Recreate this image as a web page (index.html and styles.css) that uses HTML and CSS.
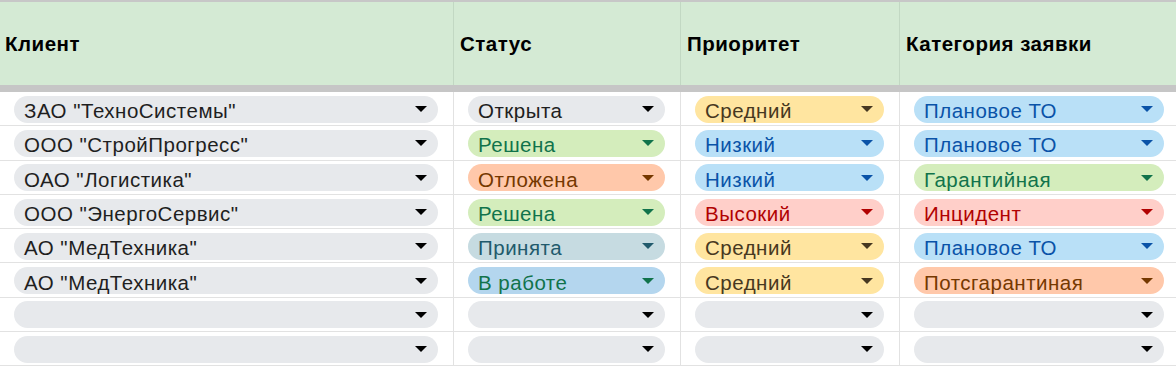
FILE: index.html
```html
<!DOCTYPE html>
<html lang="ru">
<head>
<meta charset="utf-8">
<link rel="stylesheet" href="styles.css">
</head>
<body>
<div class="sheet">
  <div class="row head">
    <div class="cell"><span class="htext">Клиент</span></div>
    <div class="cell"><span class="htext">Статус</span></div>
    <div class="cell"><span class="htext">Приоритет</span></div>
    <div class="cell"><span class="htext">Категория заявки</span></div>
  </div>
  <div class="sep"></div>

  <div class="row">
    <div class="cell"><div class="chip gray"><span class="t">ЗАО "ТехноСистемы"</span><i class="arr"></i></div></div>
    <div class="cell"><div class="chip gray"><span class="t">Открыта</span><i class="arr"></i></div></div>
    <div class="cell"><div class="chip yellow"><span class="t">Средний</span><i class="arr"></i></div></div>
    <div class="cell"><div class="chip blue"><span class="t">Плановое ТО</span><i class="arr"></i></div></div>
  </div>
  <div class="row">
    <div class="cell"><div class="chip gray"><span class="t">ООО "СтройПрогресс"</span><i class="arr"></i></div></div>
    <div class="cell"><div class="chip green"><span class="t">Решена</span><i class="arr"></i></div></div>
    <div class="cell"><div class="chip blue"><span class="t">Низкий</span><i class="arr"></i></div></div>
    <div class="cell"><div class="chip blue"><span class="t">Плановое ТО</span><i class="arr"></i></div></div>
  </div>
  <div class="row">
    <div class="cell"><div class="chip gray"><span class="t">ОАО "Логистика"</span><i class="arr"></i></div></div>
    <div class="cell"><div class="chip orange"><span class="t">Отложена</span><i class="arr"></i></div></div>
    <div class="cell"><div class="chip blue"><span class="t">Низкий</span><i class="arr"></i></div></div>
    <div class="cell"><div class="chip green"><span class="t">Гарантийная</span><i class="arr"></i></div></div>
  </div>
  <div class="row">
    <div class="cell"><div class="chip gray"><span class="t">ООО "ЭнергоСервис"</span><i class="arr"></i></div></div>
    <div class="cell"><div class="chip green"><span class="t">Решена</span><i class="arr"></i></div></div>
    <div class="cell"><div class="chip red"><span class="t">Высокий</span><i class="arr"></i></div></div>
    <div class="cell"><div class="chip red"><span class="t">Инцидент</span><i class="arr"></i></div></div>
  </div>
  <div class="row">
    <div class="cell"><div class="chip gray"><span class="t">АО "МедТехника"</span><i class="arr"></i></div></div>
    <div class="cell"><div class="chip cyan"><span class="t">Принята</span><i class="arr"></i></div></div>
    <div class="cell"><div class="chip yellow"><span class="t">Средний</span><i class="arr"></i></div></div>
    <div class="cell"><div class="chip blue"><span class="t">Плановое ТО</span><i class="arr"></i></div></div>
  </div>
  <div class="row">
    <div class="cell"><div class="chip gray"><span class="t">АО "МедТехника"</span><i class="arr"></i></div></div>
    <div class="cell"><div class="chip work"><span class="t">В работе</span><i class="arr"></i></div></div>
    <div class="cell"><div class="chip yellow"><span class="t">Средний</span><i class="arr"></i></div></div>
    <div class="cell"><div class="chip orange"><span class="t">Потсгарантиная</span><i class="arr"></i></div></div>
  </div>
  <div class="row">
    <div class="cell"><div class="chip gray"><span class="t"></span><i class="arr"></i></div></div>
    <div class="cell"><div class="chip gray"><span class="t"></span><i class="arr"></i></div></div>
    <div class="cell"><div class="chip gray"><span class="t"></span><i class="arr"></i></div></div>
    <div class="cell"><div class="chip gray"><span class="t"></span><i class="arr"></i></div></div>
  </div>
  <div class="row">
    <div class="cell"><div class="chip gray"><span class="t"></span><i class="arr"></i></div></div>
    <div class="cell"><div class="chip gray"><span class="t"></span><i class="arr"></i></div></div>
    <div class="cell"><div class="chip gray"><span class="t"></span><i class="arr"></i></div></div>
    <div class="cell"><div class="chip gray"><span class="t"></span><i class="arr"></i></div></div>
  </div>
</div>
</body>
</html>
```
FILE: styles.css
```css
html, body {
  margin: 0;
  padding: 0;
  background: #ffffff;
  overflow: hidden;
}
body {
  font-family: "Liberation Sans", Arial, sans-serif;
  color: #1f1f1f;
}
.sheet {
  width: 1180px;
  border-top: 2px solid #c7c7c7;
}
.row {
  display: grid;
  grid-template-columns: 454px 227px 219px 280px;
  height: 34.3px;
  box-sizing: border-box;
  border-bottom: 1px solid #e2e2e2;
}
.cell {
  box-sizing: border-box;
  border-right: 1px solid #e2e2e2;
  padding: 0 15px 0 14px;
  display: flex;
  align-items: center;
  min-width: 0;
}
.row.head {
  height: 83px;
  background: #d4ead4;
  border-bottom: none;
}
.row.head .cell {
  border-right-color: #c2d8c3;
  padding: 0 6px;
}
.row.head .cell:first-child {
  padding-left: 5px;
}
.htext {
  font-weight: 700;
  font-size: 20.5px;
  letter-spacing: 0.5px;
  color: #000;
  padding-top: 1px;
}
.sep {
  height: 7px;
  background: #c6c6c6;
}
.chip {
  flex: 1;
  height: 27px;
  border-radius: 14px;
  display: flex;
  align-items: center;
  justify-content: space-between;
  padding: 0 11px 0 10px;
  font-size: 20.5px;
  letter-spacing: 0.5px;
  margin-top: 1px;
}
.t {
  white-space: nowrap;
  line-height: 27px;
  padding-top: 3px;
}
.arr {
  width: 0;
  height: 0;
  border-left: 6px solid transparent;
  border-right: 6px solid transparent;
  border-top: 6px solid currentColor;
}
.gray { background: #e7e9ec; color: #1f1f1f; }
.gray .arr { border-top-color: #000; }
.yellow { background: #ffe5a0; color: #473821; }
.blue { background: #b9e0f7; color: #0a53a8; }
.green { background: #d4edbc; color: #11734b; }
.orange { background: #ffc8aa; color: #753800; }
.red { background: #ffcfc9; color: #b10202; }
.cyan { background: #c6dbe1; color: #215a6c; }
.work { background: #b4d6ee; color: #11734b; }
```
